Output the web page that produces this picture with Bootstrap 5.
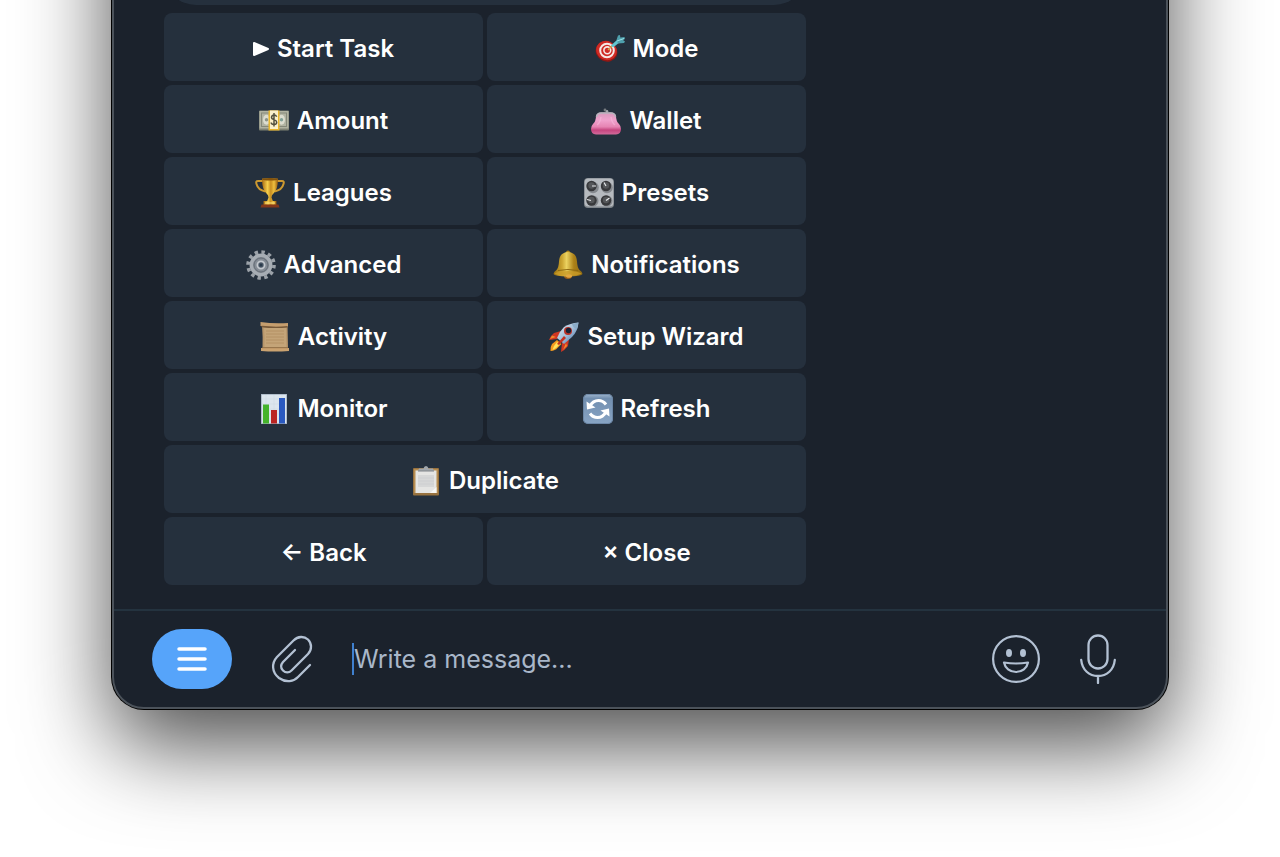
<!DOCTYPE html>
<html lang="en">
<head>
    <meta charset="UTF-8">
    <meta name="viewport" content="width=device-width, initial-scale=1.0">
    <title>Bot Menu</title>
    <link href="https://cdn.jsdelivr.net/npm/bootstrap@5.3.0/dist/css/bootstrap.min.css" rel="stylesheet">
    <style>
        body {
            background: #fff;
            font-family: Inter, "Liberation Sans", sans-serif;
        }
        .stage {
            min-height: 100vh;
            padding: 0 112px;
        }
        .chat-window {
            margin-top: -200px;
            background: #1b222c;
            border: 2px solid #4b525a;
            border-radius: 32px;
            box-shadow: 0 0 0 1px #000, 0 36px 88px rgba(0, 0, 0, 0.7);
        }
        .chat-log {
            padding: 0 50px 24px;
        }
        .message {
            max-width: 642px;
        }
        .bubble {
            height: 203px;
            margin-bottom: 8px;
            background: #25303d;
            border-radius: 32px;
        }
        .keyboard {
            display: grid;
            grid-template-columns: 1fr 1fr;
            gap: 4px;
        }
        .key {
            --bs-btn-color: #fff;
            --bs-btn-bg: #25303d;
            --bs-btn-border-width: 0;
            --bs-btn-border-radius: 8px;
            --bs-btn-hover-color: #fff;
            --bs-btn-hover-bg: #2d3a49;
            --bs-btn-active-color: #fff;
            --bs-btn-active-bg: #324152;
            --bs-btn-font-size: 24px;
            --bs-btn-font-weight: 600;
            --bs-btn-line-height: 32px;
            height: 68px;
            padding: 4px 0 0;
        }
        .key-wide {
            grid-column: span 2;
        }
        .key svg {
            width: 30px;
            height: 30px;
        }
        .key .play {
            width: 16px;
            height: 16px;
        }
        .composer {
            height: 98px;
            padding: 0 50px 0 38px;
            border-top: 2px solid #24333f;
        }
        .composer .btn {
            --bs-btn-color: #b3c1d3;
            --bs-btn-hover-color: #d5deea;
            --bs-btn-border-width: 0;
        }
        .composer .menu-btn {
            width: 80px;
            height: 60px;
            background: #56a4fa;
        }
        .clip-btn {
            margin: 0 36px;
        }
        .message-input {
            height: 32px;
            border: 0;
            border-left: 2px solid #3f80cf;
            background: transparent;
            color: #fff;
            font-size: 25px;
            line-height: 32px;
            outline: 0;
        }
        .message-input::placeholder {
            color: #a9b7c9;
            opacity: 1;
        }
    </style>
</head>
<body>
    <main class="stage overflow-hidden">
        <div class="chat-window">
            <section class="chat-log">
                <div class="message">
                    <div class="bubble"></div>
                    <div class="keyboard">
                        <button type="button" class="key btn d-flex align-items-center justify-content-center gap-2">
                            <svg class="play" viewBox="0 0 16 16" aria-hidden="true"><path d="M1 2v12L15 8z" fill="#fff" stroke="#fff" stroke-width="2" stroke-linejoin="round"/></svg>
                            Start Task
                        </button>
                        <button type="button" class="key btn d-flex align-items-center justify-content-center gap-2">
                            <svg viewBox="0 0 30 30" aria-hidden="true">
                                <ellipse cx="11.5" cy="17.5" rx="11" ry="10" transform="rotate(25 11.5 17.5)" fill="#8f1714"/>
                                <ellipse cx="11.5" cy="16.5" rx="10.500" ry="9.5" transform="rotate(25 11.5 16.5)" fill="#cf2a24"/>
                                <circle cx="12" cy="16.5" r="6.8" fill="none" stroke="#f6e9e6" stroke-width="2"/>
                                <circle cx="12.3" cy="16.3" r="3.4" fill="#cf2a24" stroke="#f6e9e6" stroke-width="1.6"/>
                                <path d="M13 16l5-5" stroke="#d8a64a" stroke-width="1.5"/>
                                <path d="M16 11.5l7-6.500 2 3-7 5.5z" fill="#63c4cf"/>
                                <path d="M21.500 6l1.500-4.500 2-.5.3 2.5L29.500 3l.5 2-2 1 2 1.500-1 1.500-6 .5z" fill="#4fa0ad"/>
                                <path d="M22 7l7-2.500" stroke="#9be3e8" stroke-width="1"/>
                            </svg>
                            Mode
                        </button>
                        <button type="button" class="key btn d-flex align-items-center justify-content-center gap-2">
                            <svg viewBox="0 0 30 30" aria-hidden="true">
                                <rect y="4.5" width="30" height="20" rx="1" fill="#7f8274"/>
                                <rect x=".5" y="5" width="29" height="17.5" fill="#b1b3a2"/>
                                <rect x="2.5" y="7" width="25" height="13.5" fill="none" stroke="#85897a" stroke-width="1"/>
                                <ellipse cx="7.5" cy="13.7" rx="3.5" ry="5" fill="#dcddd0"/>
                                <ellipse cx="22.5" cy="13.7" rx="3.5" ry="5" fill="#dcddd0"/>
                                <circle cx="7.5" cy="13.7" r="1.7" fill="#8c9488"/>
                                <circle cx="22.5" cy="13.7" r="1.7" fill="#7fa096"/>
                                <rect x="9.5" y="4.5" width="11" height="20" fill="#e9b62c"/>
                                <rect x="11" y="4.5" width="8" height="18.5" fill="#faf0ca"/>
                                <path d="M17.700 10.800Q17 9 15 9t-2.500 2.200q0 1.700 2.500 2.400t2.700 2.600Q17.700 18.500 15 18.500t-2.800-2M15 7v13.500" fill="none" stroke="#53513f" stroke-width="1.5"/>
                            </svg>
                            Amount
                        </button>
                        <button type="button" class="key btn d-flex align-items-center justify-content-center gap-2">
                            <svg viewBox="0 0 30 30" aria-hidden="true">
                                <defs>
                                    <linearGradient id="purse" x2="0" y2="1"><stop stop-color="#d99abd"/><stop offset=".35" stop-color="#f0a2cd"/><stop offset=".65" stop-color="#e684b3"/><stop offset=".8" stop-color="#c5457f"/><stop offset="1" stop-color="#d26b9b"/></linearGradient>
                                </defs>
                                <circle cx="14" cy="4" r="1.4" fill="#777b80"/>
                                <circle cx="16" cy="5.2" r="1.3" fill="#a5a9ad"/>
                                <path d="M5 10Q6 6.500 10 6.500h10q4 0 5 3.500 0 5 3 8 2 2 2 5 0 5-5 5.500H5q-5-.5-5-5.500 0-3 2-5 3-3 3-8z" fill="url(#purse)"/>
                                <path d="M5.500 11Q6 7 10 7h10q4 0 4.500 4" fill="none" stroke="#b7b5bd" stroke-width="1.500"/>
                                <path d="M10 11q-1 6-4 8M20 11q1 6 4 8" fill="none" stroke="#f6b7da" stroke-width="1.5" opacity=".6"/>
                            </svg>
                            Wallet
                        </button>
                        <button type="button" class="key btn d-flex align-items-center justify-content-center gap-2">
                            <svg viewBox="0 0 30 30" aria-hidden="true">
                                <defs>
                                    <linearGradient id="gold"><stop stop-color="#a86b12"/><stop offset=".35" stop-color="#f6cf4b"/><stop offset=".55" stop-color="#c88e20"/><stop offset=".75" stop-color="#efc040"/><stop offset="1" stop-color="#94590d"/></linearGradient>
                                </defs>
                                <path d="M8 3H3Q.5 3 1.500 6q1.500 6 9 7.500M22 3h5q2.500 0 1.500 3-1.500 6-9 7.500" fill="none" stroke="#cd9930" stroke-width="2"/>
                                <path d="M7 .5h16q0 11-4.500 15-2 1.500-2 4l1.500 4h-6l1.500-4q0-2.500-2-4Q7 11.500 7 .5z" fill="url(#gold)"/>
                                <ellipse cx="15" cy="1.300" rx="8" ry="1.300" fill="#84520b"/>
                                <path d="M8.500 23h13v4h-13z" fill="url(#gold)"/>
                                <path d="M6.500 26.500h17l1 3h-19z" fill="#84371a"/>
                                <path d="M10 25h10" stroke="#fbe580"/>
                            </svg>
                            Leagues
                        </button>
                        <button type="button" class="key btn d-flex align-items-center justify-content-center gap-2">
                            <svg viewBox="0 0 30 30" aria-hidden="true">
                                <rect width="30" height="30" rx="4" fill="#7f858b"/>
                                <rect x=".7" y=".5" width="28.6" height="28" rx="3.5" fill="#b6babf"/>
                                <g fill="#85898e"><circle cx="9" cy="9.5" r="5.8"/><circle cx="23" cy="9.5" r="5.8"/><circle cx="9" cy="23" r="5.5"/><circle cx="23" cy="23" r="5.5"/></g>
                                <g fill="#38393c"><circle cx="7.5" cy="8" r="5.2"/><circle cx="22" cy="8" r="5.2"/><circle cx="7.5" cy="22.5" r="5.2"/><circle cx="22" cy="22.5" r="5.2"/></g>
                                <g fill="#55575a"><circle cx="7.5" cy="7.5" r="3.2"/><circle cx="22" cy="7.5" r="3.2"/><circle cx="7.5" cy="22" r="3.2"/><circle cx="22" cy="22" r="3.2"/></g>
                                <path d="M8 8h4M22 8l-2-3.500M7 22.500l-4-1M22 22.500l3.500-2.500" stroke="#e7e9eb" stroke-width="1.2"/>
                            </svg>
                            Presets
                        </button>
                        <button type="button" class="key btn d-flex align-items-center justify-content-center gap-2">
                            <svg viewBox="0 0 30 30" aria-hidden="true">
                                <circle cx="15" cy="15" r="13" fill="none" stroke="#9ba1a8" stroke-width="3.6" stroke-dasharray="3.400 3.407"/>
                                <circle cx="15" cy="15" r="9.7" fill="#828991" stroke="#a7adb4" stroke-width="3.5"/>
                                <circle cx="15" cy="15" r="7" fill="#858c95" stroke="#666e78" stroke-width="1"/>
                                <circle cx="15" cy="15" r="3.6" fill="#4d5968" stroke="#c3c8ce" stroke-width="1.8"/>
                                <circle cx="15" cy="15" r="1.5" fill="#28394a"/>
                            </svg>
                            Advanced
                        </button>
                        <button type="button" class="key btn d-flex align-items-center justify-content-center gap-2">
                            <svg viewBox="0 0 30 30" aria-hidden="true">
                                <defs>
                                    <linearGradient id="brass"><stop stop-color="#99700e"/><stop offset=".3" stop-color="#cda632"/><stop offset=".45" stop-color="#ecd260"/><stop offset=".7" stop-color="#ac8118"/><stop offset="1" stop-color="#8f6a12"/></linearGradient>
                                </defs>
                                <circle cx="15" cy="2.5" r="2" fill="#b4871c"/>
                                <ellipse cx="15" cy="26" rx="4" ry="3" fill="#9b5f18"/>
                                <path d="M15 2q8.500.5 9 9.500.3 6 2.500 8.500 3 2 3 4-1 2-14.500 2.500Q1.500 26 .5 24q0-2 3-4Q5.700 17.500 6 11.500 6.500 2.500 15 2z" fill="url(#brass)"/>
                                <path d="M1.500 23.500Q5 21 15 21t13.500 2.500q-4 2.500-13.500 2.500T1.500 23.500z" fill="#c99b28" opacity=".8"/>
                                <path d="M5 20.500q10-2 20 0" fill="none" stroke="#8d6810" stroke-width="1"/>
                                <ellipse cx="16" cy="26" rx="3" ry="1.8" fill="#e4a640"/>
                            </svg>
                            Notifications
                        </button>
                        <button type="button" class="key btn d-flex align-items-center justify-content-center gap-2">
                            <svg viewBox="0 0 30 30" aria-hidden="true">
                                <path d="M2 3h25.500l.5 24H2.500Q3 15 2 3z" fill="#b8966b"/>
                                <path d="M4 6h22l.4 19H4.500Q5 15 4 6z" fill="#c4a478"/>
                                <path d="M6 9h18M6 12h18M6 15h18M6 18h18M6 21h18" stroke="#b18d5f" stroke-width=".8"/>
                                <path d="M.5 0Q14 2 28 1v3.500Q14 5 .5 4z" fill="#c69e6e"/>
                                <path d="M1.500 4.500q13 1.500 26 .3" fill="none" stroke="#785938" stroke-width="1.4"/>
                                <path d="M1 26h28v3q-14 1-28 0z" fill="#caa270"/>
                                <path d="M2 25.700h26" stroke="#87643e" stroke-width=".8"/>
                            </svg>
                            Activity
                        </button>
                        <button type="button" class="key btn d-flex align-items-center justify-content-center gap-2">
                            <svg viewBox="0 0 30 30" aria-hidden="true">
                                <defs>
                                    <linearGradient id="hull" x2="1" y2="1"><stop stop-color="#e5edf4"/><stop offset=".5" stop-color="#a5bfd9"/><stop offset="1" stop-color="#3867a1"/></linearGradient>
                                </defs>
                                <path d="M12 9L5 11Q1 14 0 18l8-1zM20 17l-1 7q-3 4-7 6l1-9z" fill="#d03622"/>
                                <path d="M3 13.500l-2 3.500 6-2zM17 21l-3 7 4-4z" fill="#f08b2c"/>
                                <path d="M8 18l-5 4q-2 3-1.500 7 5-.5 7-3l4-4z" fill="#f59b1e"/>
                                <path d="M8 20l-3 4-1.500 4Q8 26 11 22z" fill="#ffe45c"/>
                                <path d="M29.500.5Q29 9 23 15l-8 7-7-6q2-6 7-11Q21 1 29.500.5z" fill="url(#hull)"/>
                                <path d="M29.500.5L23 2q1 4 5 5z" fill="#8cacc8"/>
                                <path d="M15 14l-7 8 2 1 7-7z" fill="#c5301f"/>
                                <circle cx="19" cy="9" r="4" fill="#b93228"/>
                                <circle cx="19.5" cy="8.5" r="2.7" fill="#182233"/>
                            </svg>
                            Setup Wizard
                        </button>
                        <button type="button" class="key btn d-flex align-items-center justify-content-center gap-2">
                            <svg viewBox="0 0 30 30" aria-hidden="true">
                                <rect x="2" width="26" height="30" fill="#dce5ee"/>
                                <path d="M2 5h26M2 10h26M2 15h26M2 20h26M2 25h26M7 0v30M15 0v30M23 0v30" stroke="#d0dae4" stroke-width=".6"/>
                                <rect x="2.4" y=".4" width="25.2" height="29.2" fill="none" stroke="#a7b5c4" stroke-width=".8"/>
                                <rect x="4" y="10.5" width="6" height="19" fill="#45b32c"/>
                                <rect x="12" y="16" width="6" height="13.500" fill="#bb2422"/>
                                <rect x="20" y="4" width="6" height="25.500" fill="#2a59c0"/>
                            </svg>
                            Monitor
                        </button>
                        <button type="button" class="key btn d-flex align-items-center justify-content-center gap-2">
                            <svg viewBox="0 0 30 30" aria-hidden="true">
                                <defs>
                                    <linearGradient id="tile" x2="0" y2="1"><stop stop-color="#a0b7cf"/><stop offset=".15" stop-color="#728fb0"/><stop offset="1" stop-color="#88a4c4"/></linearGradient>
                                </defs>
                                <rect width="30" height="30" rx="5" fill="url(#tile)"/>
                                <rect x=".5" y=".5" width="29" height="29" rx="4.5" fill="none" stroke="#66809f" stroke-width=".8"/>
                                <path d="M7 12Q10 6.500 15.500 6.500q4.500 0 7.500 4M23 18q-3 5.500-8.500 5.500-4.500 0-7.500-4" fill="none" stroke="#fff" stroke-width="3"/>
                                <path d="M3.500 7.500L4 15.500l8.500-2zM26.500 22.500L26 14.500l-8.500 2z" fill="#fff"/>
                            </svg>
                            Refresh
                        </button>
                        <button type="button" class="key key-wide btn d-flex align-items-center justify-content-center gap-2">
                            <svg viewBox="0 0 30 30" aria-hidden="true">
                                <rect x="2" y="2" width="26" height="27.5" rx="1" fill="#98723f"/>
                                <rect x="3" y="3" width="24" height="24" fill="#b68d52"/>
                                <path d="M4.500 4.500h21V27h-21z" fill="#e5e5e3"/>
                                <path d="M7 9h16v12H7z" fill="#d6d7d7"/>
                                <path d="M7 12h16M7 15h16M7 18h16" stroke="#cacbcc" stroke-width=".6"/>
                                <path d="M19 27h6.500v-6z" fill="#f7f7f5"/>
                                <path d="M7 5l1-2.500h4.500Q13 0 15 0t2.500 2.500H22L23 5z" fill="#a2a7ac"/>
                                <path d="M7 5h16" stroke="#808489"/>
                            </svg>
                            Duplicate
                        </button>
                        <button type="button" class="key btn">← Back</button>
                        <button type="button" class="key btn">× Close</button>
                    </div>
                </div>
            </section>
            <form class="composer d-flex align-items-center">
                <button type="button" class="menu-btn btn rounded-pill p-0 flex-shrink-0" aria-label="Menu">
                    <svg width="30" height="26" viewBox="0 0 30 26" fill="none" stroke="#fff" stroke-width="3.5" stroke-linecap="round"><path d="M2 3h26M2 13h26M2 23h26"/></svg>
                </button>
                <button type="button" class="clip-btn btn p-0 flex-shrink-0" aria-label="Attach file">
                    <svg class="d-block" width="48" height="48" viewBox="0 0 48 48" fill="none" stroke="currentColor" stroke-width="2.3" stroke-linecap="round" stroke-linejoin="round"><path d="M42 30L30 42C26 46.500 18 48 11 43 3.500 37 3.500 28 9 22L25.500 5.500C30 1 36 1 40 4.500 44 8.500 44 15 40 19L23.500 35.500C21 38 17.500 38 15 35.500 12.500 33 12.500 30 15 27L27 15"/></svg>
                </button>
                <input type="text" class="message-input flex-grow-1 p-0" placeholder="Write a message..." aria-label="Message">
                <button type="button" class="btn p-0 flex-shrink-0" aria-label="Emoji">
                    <svg class="d-block" width="48" height="48" viewBox="0 0 48 48" fill="none" stroke="currentColor" stroke-width="2.2" stroke-linejoin="round">
                        <circle cx="24" cy="24" r="22.900"/>
                        <ellipse cx="17" cy="18" rx="3" ry="4" fill="currentColor" stroke="none"/>
                        <ellipse cx="31" cy="18" rx="3" ry="4" fill="currentColor" stroke="none"/>
                        <path d="M12 27.500q12 2 24 0C35 33 30 37 24 37s-11-4-12-9.500z"/>
                    </svg>
                </button>
                <button type="button" class="btn p-0 ms-auto flex-shrink-0" aria-label="Record voice">
                    <svg class="d-block ms-4 ps-3" width="52" height="50" viewBox="0 0 36 50" fill="none" stroke="currentColor" stroke-width="2.3" stroke-linecap="round"><rect x="8.500" y="1.500" width="19" height="33" rx="9.500"/><path d="M1.200 26c1 10 8 16 16.800 16s15.800-6 16.800-16M18 42v7"/></svg>
                </button>
            </form>
        </div>
    </main>
    <script src="https://cdn.jsdelivr.net/npm/bootstrap@5.3.0/dist/js/bootstrap.bundle.min.js"></script>
</body>
</html>
